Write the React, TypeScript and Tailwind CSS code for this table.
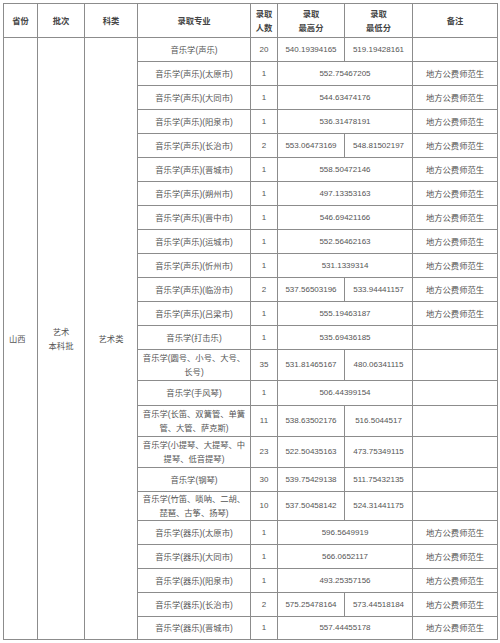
import React from "react";

type Row = {
  major: string[];
  count: string;
  high: string;
  low?: string;
  note?: string;
  h: string;
};

const NOTE = "地方公费师范生";

const rows: Row[] = [
  { major: ["音乐学(声乐)"], count: "20", high: "540.19394165", low: "519.19428161", h: "h-[24px]" },
  { major: ["音乐学(声乐)(太原市)"], count: "1", high: "552.75467205", note: NOTE, h: "h-[24px]" },
  { major: ["音乐学(声乐)(大同市)"], count: "1", high: "544.63474176", note: NOTE, h: "h-[24px]" },
  { major: ["音乐学(声乐)(阳泉市)"], count: "1", high: "536.31478191", note: NOTE, h: "h-[24px]" },
  { major: ["音乐学(声乐)(长治市)"], count: "2", high: "553.06473169", low: "548.81502197", note: NOTE, h: "h-[24px]" },
  { major: ["音乐学(声乐)(晋城市)"], count: "1", high: "558.50472146", note: NOTE, h: "h-[24px]" },
  { major: ["音乐学(声乐)(朔州市)"], count: "1", high: "497.13353163", note: NOTE, h: "h-[24px]" },
  { major: ["音乐学(声乐)(晋中市)"], count: "1", high: "546.69421166", note: NOTE, h: "h-[24px]" },
  { major: ["音乐学(声乐)(运城市)"], count: "1", high: "552.56462163", note: NOTE, h: "h-[24px]" },
  { major: ["音乐学(声乐)(忻州市)"], count: "1", high: "531.1339314", note: NOTE, h: "h-[24px]" },
  { major: ["音乐学(声乐)(临汾市)"], count: "2", high: "537.56503196", low: "533.94441157", note: NOTE, h: "h-[24px]" },
  { major: ["音乐学(声乐)(吕梁市)"], count: "1", high: "555.19463187", note: NOTE, h: "h-[24px]" },
  { major: ["音乐学(打击乐)"], count: "1", high: "535.69436185", h: "h-[24px]" },
  { major: ["音乐学(圆号、小号、大号、", "长号)"], count: "35", high: "531.81465167", low: "480.06341115", h: "h-[31px]" },
  { major: ["音乐学(手风琴)"], count: "1", high: "506.44399154", h: "h-[25px]" },
  { major: ["音乐学(长笛、双簧管、单簧", "管、大管、萨克斯)"], count: "11", high: "538.63502176", low: "516.5044517", h: "h-[31px]" },
  { major: ["音乐学(小提琴、大提琴、中", "提琴、低音提琴)"], count: "23", high: "522.50435163", low: "473.75349115", h: "h-[31px]" },
  { major: ["音乐学(钢琴)"], count: "30", high: "539.75429138", low: "511.75432135", h: "h-[24px]" },
  { major: ["音乐学(竹笛、唢呐、二胡、", "琵琶、古筝、扬琴)"], count: "10", high: "537.50458142", low: "524.31441175", h: "h-[29px]" },
  { major: ["音乐学(器乐)(太原市)"], count: "1", high: "596.5649919", note: NOTE, h: "h-[24px]" },
  { major: ["音乐学(器乐)(大同市)"], count: "1", high: "566.0652117", note: NOTE, h: "h-[24px]" },
  { major: ["音乐学(器乐)(阳泉市)"], count: "1", high: "493.25357156", note: NOTE, h: "h-[24px]" },
  { major: ["音乐学(器乐)(长治市)"], count: "2", high: "575.25478164", low: "573.44518184", note: NOTE, h: "h-[24px]" },
  { major: ["音乐学(器乐)(晋城市)"], count: "1", high: "557.44455178", note: NOTE, h: "h-[23px]" },
];

const cell = "border border-[#8c8c8c] p-0 text-center align-middle whitespace-nowrap";
const cjk = "text-[8.3px] leading-[14px]";
const num = "text-[8px] leading-[14px]";
const head =
  "border border-[#8c8c8c] p-0 text-center align-middle whitespace-nowrap text-[8.3px] leading-[14px] font-bold text-[#444]";

export default function App() {
  return (
    <div
      className="w-[500px] h-[643px] bg-white pt-[3px] pl-[3px] overflow-hidden text-[#555]"
      style={{ fontFamily: '"Liberation Sans", "Noto Sans CJK SC", sans-serif' }}
    >
      <table className="w-[494px] table-fixed border-collapse">
        <colgroup>
          <col className="w-[34px]" />
          <col className="w-[47px]" />
          <col className="w-[53px]" />
          <col className="w-[113px]" />
          <col className="w-[27px]" />
          <col className="w-[67px]" />
          <col className="w-[68px]" />
          <col className="w-[85px]" />
        </colgroup>
        <thead>
          <tr className="h-[34px]">
            <th className={head}>省份</th>
            <th className={head}>批次</th>
            <th className={head}>科类</th>
            <th className={head}>录取专业</th>
            <th className={head}>
              录取
              <br />
              人数
            </th>
            <th className={head}>
              录取
              <br />
              最高分
            </th>
            <th className={head}>
              录取
              <br />
              最低分
            </th>
            <th className={head}>备注</th>
          </tr>
        </thead>
        <tbody>
          {rows.map((r, i) => (
            <tr key={i} className={r.h}>
              {i === 0 && (
                <>
                  <td rowSpan={rows.length} className={`${cell} ${cjk} text-left pl-[5px]`}>
                    山西
                  </td>
                  <td rowSpan={rows.length} className={`${cell} ${cjk}`}>
                    艺术
                    <br />
                    本科批
                  </td>
                  <td rowSpan={rows.length} className={`${cell} ${cjk}`}>
                    艺术类
                  </td>
                </>
              )}
              <td className={`${cell} ${cjk}`}>
                {r.major.map((m, j) => (
                  <div key={j}>{m}</div>
                ))}
              </td>
              <td className={`${cell} ${num}`}>{r.count}</td>
              {r.low ? (
                <>
                  <td className={`${cell} ${num}`}>{r.high}</td>
                  <td className={`${cell} ${num}`}>{r.low}</td>
                </>
              ) : (
                <td colSpan={2} className={`${cell} ${num}`}>
                  {r.high}
                </td>
              )}
              <td className={`${cell} ${cjk}`}>{r.note ?? ""}</td>
            </tr>
          ))}
        </tbody>
      </table>
    </div>
  );
}
